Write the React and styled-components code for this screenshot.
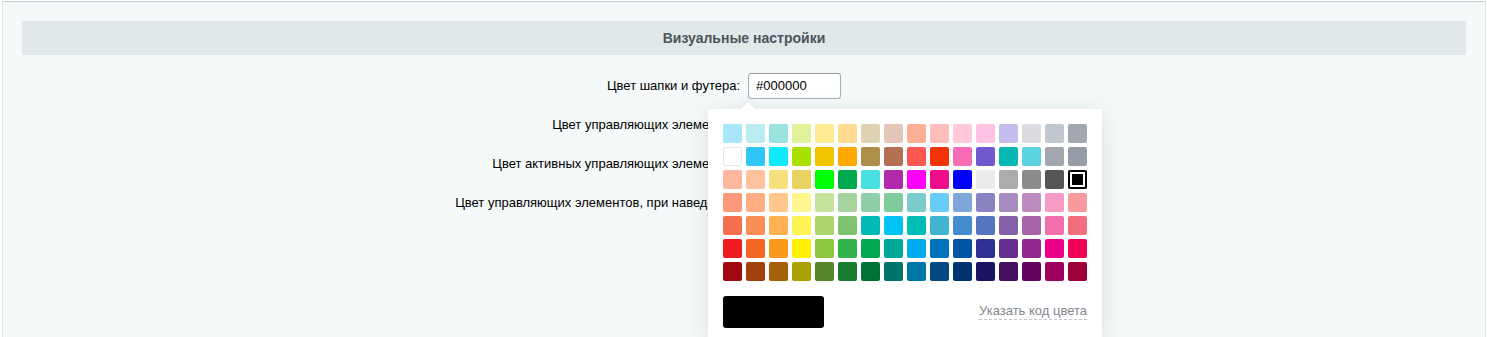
import React from 'react'
import styled, { createGlobalStyle } from 'styled-components'

const GlobalStyle = createGlobalStyle`
  html, body {
    margin: 0;
    padding: 0;
    background: #fff;
    font-family: "Liberation Sans", Arial, sans-serif;
    font-size: 13px;
    color: #000;
  }
`

const palette = [
  ['#a8e6f9', '#b9ebf0', '#9ae2dd', '#e2f29b', '#ffec93', '#ffdc92', '#ded2b5', '#e3c5ba', '#ffae96', '#ffbdbb', '#ffc9d9', '#ffc2e3', '#c5bdee', '#dbdce1', '#c1c7cf', '#a3a8b0'],
  ['#ffffff', '#2fc6f6', '#11e9fb', '#aae000', '#f0c400', '#ffa900', '#ae8f4a', '#b37153', '#ff5752', '#f23306', '#f86cb6', '#7057cd', '#07b8b3', '#5dd2e1', '#a2a6ae', '#959ca7'],
  ['#ffb8a0', '#ffc29f', '#f4e07d', '#e8d361', '#00ff00', '#00a84e', '#47dfe1', '#b02aab', '#ff00ff', '#f00d8c', '#0000ff', '#ebebeb', '#acacac', '#8b8b8b', '#555555', '#000000'],
  ['#fb987a', '#ffad82', '#ffc78c', '#fff68f', '#c7e29a', '#a4d39d', '#8fcfa8', '#80cb9c', '#7bcdcd', '#69ccf6', '#7da7d9', '#8a83c1', '#a68ac0', '#be8bc0', '#f59bc4', '#f8999b'],
  ['#f5704f', '#f98d53', '#feb052', '#fff253', '#add56b', '#7fc36e', '#00bab8', '#00c3f2', '#00bdb6', '#41b5d0', '#438ccf', '#5575be', '#8560a8', '#a964a8', '#f36fab', '#f36e7c'],
  ['#ee1c22', '#f36522', '#f8981d', '#fff100', '#8dc63f', '#32b44a', '#01a84f', '#00a89a', '#01acee', '#0072bc', '#0054a6', '#2e3192', '#652d92', '#92278f', '#ec008b', '#ee0055'],
  ['#9e0a0f', '#a0410d', '#a36209', '#aba000', '#588528', '#197b30', '#007236', '#00736a', '#0076a4', '#004a81', '#003471', '#1b1464', '#450e61', '#630460', '#9e005d', '#9e0039'],
]

const fields = [
  { label: 'Цвет шапки и футера:', value: '#000000', picker: true },
  { label: 'Цвет управляющих элементов:', value: '#2fc6f6' },
  { label: 'Цвет активных управляющих элементов:', value: '#0072bc' },
  { label: 'Цвет управляющих элементов, при наведении:', value: '#41b5d0' },
]

const Page = styled.div`
  margin: 1px 1px 0 2px;
  min-height: 340px;
  box-sizing: border-box;
  padding: 19px;
  background: #f5f9f9;
  border-top: 1px solid #c9d0d3;
  border-left: 1px solid #dbe4e7;
  border-right: 1px solid #dbe4e7;
`

const SectionHeader = styled.div`
  height: 34px;
  display: flex;
  align-items: center;
  justify-content: center;
  background: #e0e8e9;
  color: #4b555c;
  font-weight: bold;
  font-size: 14px;
`

const Form = styled.div`
  display: grid;
  grid-template-columns: 1fr 1fr;
  margin-top: 11px;
`

const Label = styled.div`
  height: 39px;
  display: flex;
  align-items: center;
  justify-content: flex-end;
  padding-right: 4px;
  white-space: nowrap;
`

const Field = styled.div`
  height: 39px;
  display: flex;
  align-items: center;
  padding-left: 4px;
`

const InputWrap = styled.div`
  position: relative;
  z-index: ${(p) => (p.$open ? 5 : 1)};
`

const ColorInput = styled.input`
  box-sizing: border-box;
  width: 93px;
  height: 26px;
  padding: 0 7px;
  border: 1px solid #a7adb3;
  border-top-color: #969ca2;
  border-radius: 3px;
  background: #fff;
  font-family: "Liberation Sans", Arial, sans-serif;
  font-size: 13px;
  color: #000;
  outline: none;
`

const Popup = styled.div`
  position: absolute;
  left: -40px;
  top: 36px;
  width: 394px;
  box-sizing: border-box;
  padding: 15px;
  background: #fff;
  box-shadow: 0 4px 22px rgba(70, 90, 100, 0.16);
`

const Arrow = styled.div`
  position: absolute;
  left: 35px;
  top: -5px;
  width: 10px;
  height: 10px;
  background: #fff;
  transform: rotate(45deg);
  box-shadow: -3px -3px 6px rgba(70, 90, 100, 0.06);
`

const Swatches = styled.div`
  display: grid;
  grid-template-columns: repeat(16, 19px);
  grid-auto-rows: 19px;
  gap: 4px;
`

const Swatch = styled.div`
  border-radius: 2px;
  background: ${(p) => p.$color};
  box-sizing: border-box;
  border: ${(p) => (p.$color === '#ffffff' ? '1px solid #e4e6e8' : 'none')};
  box-shadow: ${(p) => (p.$selected ? 'inset 0 0 0 2px #000, inset 0 0 0 4px #fff' : 'none')};
`

const PickerFooter = styled.div`
  display: flex;
  align-items: center;
  justify-content: space-between;
  margin-top: 15px;
`

const Preview = styled.div`
  width: 101px;
  height: 32px;
  border-radius: 3px;
  background: ${(p) => p.$color};
`

const CodeLink = styled.span`
  color: #82888f;
  font-size: 13px;
  line-height: 16px;
  border-bottom: 1px dashed #c3c7cb;
  cursor: pointer;
`

function ColorPicker({ value }) {
  return (
    <Popup>
      <Arrow />
      <Swatches>
        {palette.flat().map((c, i) => (
          <Swatch key={i} $color={c} $selected={c === value} />
        ))}
      </Swatches>
      <PickerFooter>
        <Preview $color={value} />
        <CodeLink>Указать код цвета</CodeLink>
      </PickerFooter>
    </Popup>
  )
}

export default function App() {
  return (
    <>
      <GlobalStyle />
      <Page>
        <SectionHeader>Визуальные настройки</SectionHeader>
        <Form>
          {fields.map((f) => (
            <React.Fragment key={f.label}>
              <Label>{f.label}</Label>
              <Field>
                <InputWrap $open={f.picker}>
                  <ColorInput defaultValue={f.value} />
                  {f.picker && <ColorPicker value={f.value} />}
                </InputWrap>
              </Field>
            </React.Fragment>
          ))}
        </Form>
      </Page>
    </>
  )
}
